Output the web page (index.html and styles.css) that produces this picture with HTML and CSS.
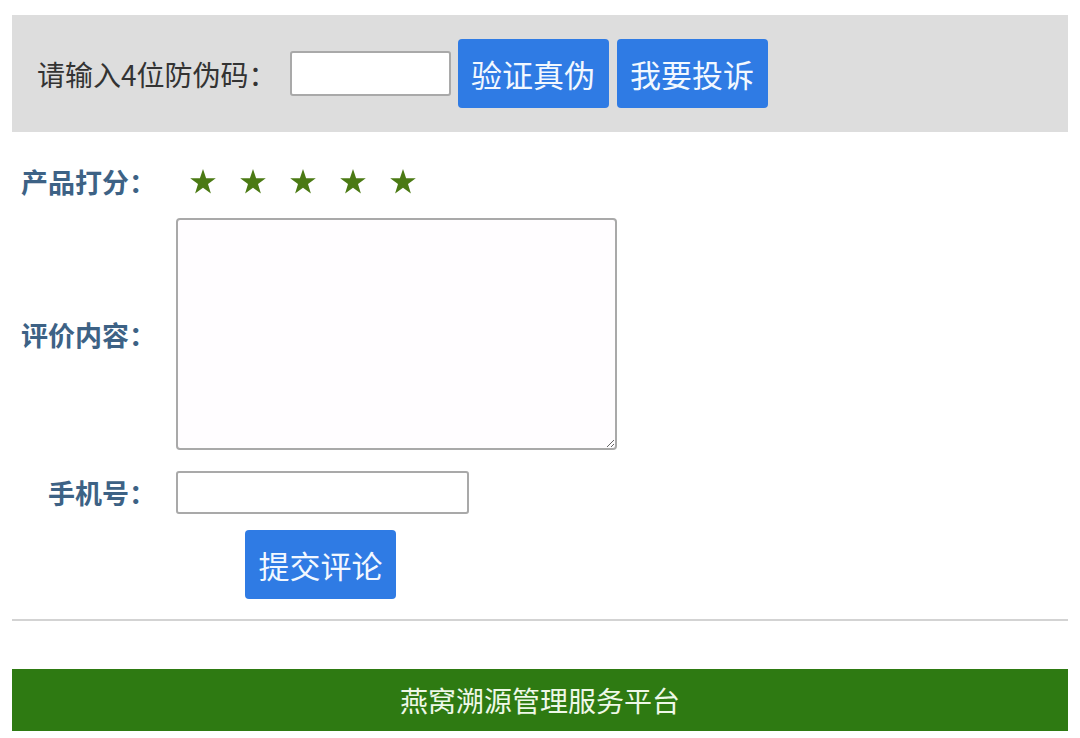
FILE: index.html
```html
<!DOCTYPE html>
<html lang="zh-CN">
<head>
<meta charset="utf-8">
<title>燕窝溯源管理服务平台</title>
<link rel="stylesheet" href="styles.css">
</head>
<body>
<div class="page">
  <div class="verify">
    <span class="verify-label">请输入4位防伪码：</span>
    <input class="code-input" type="text">
    <button class="btn btn-check">验证真伪</button>
    <button class="btn btn-complain">我要投诉</button>
  </div>

  <div class="form">
    <div class="row row-rating">
      <label class="label">产品打分：</label>
      <div class="stars">
        <svg class="star" viewBox="0 0 26 25"><polygon points="13,0 16.1,9.2 25.8,9.3 18,15.1 20.9,24.4 13,18.8 5.1,24.4 8,15.1 0.2,9.3 9.9,9.2"/></svg>
        <svg class="star" viewBox="0 0 26 25"><polygon points="13,0 16.1,9.2 25.8,9.3 18,15.1 20.9,24.4 13,18.8 5.1,24.4 8,15.1 0.2,9.3 9.9,9.2"/></svg>
        <svg class="star" viewBox="0 0 26 25"><polygon points="13,0 16.1,9.2 25.8,9.3 18,15.1 20.9,24.4 13,18.8 5.1,24.4 8,15.1 0.2,9.3 9.9,9.2"/></svg>
        <svg class="star" viewBox="0 0 26 25"><polygon points="13,0 16.1,9.2 25.8,9.3 18,15.1 20.9,24.4 13,18.8 5.1,24.4 8,15.1 0.2,9.3 9.9,9.2"/></svg>
        <svg class="star" viewBox="0 0 26 25"><polygon points="13,0 16.1,9.2 25.8,9.3 18,15.1 20.9,24.4 13,18.8 5.1,24.4 8,15.1 0.2,9.3 9.9,9.2"/></svg>
      </div>
    </div>
    <div class="row row-content">
      <label class="label">评价内容：</label>
      <textarea class="content-input"></textarea>
    </div>
    <div class="row row-phone">
      <label class="label">手机号：</label>
      <input class="phone-input" type="text">
    </div>
    <div class="row row-submit">
      <span></span>
      <button class="btn btn-submit">提交评论</button>
    </div>
  </div>

  <div class="divider"></div>

  <div class="footer">燕窝溯源管理服务平台</div>
</div>
</body>
</html>
```

FILE: styles.css
```css
* {
  box-sizing: border-box;
}

html, body {
  margin: 0;
  padding: 0;
  background: #ffffff;
}

body {
  font-family: "Noto Sans CJK SC", "Noto Sans", sans-serif;
  color: #333333;
}

.page {
  padding: 15px 12px 0 12px;
}

.verify {
  height: 117px;
  background: #dddddd;
  display: flex;
  align-items: center;
  padding-left: 25px;
}

.verify-label {
  font-size: 28px;
  line-height: 1;
  color: #333333;
  margin-right: 13px;
}

.code-input {
  width: 161px;
  height: 45px;
  border: 2px solid #a9a9a9;
  border-radius: 3px;
  background: #ffffff;
  margin: 0 7px 0 0;
  padding: 0;
}

.btn {
  width: 151px;
  height: 69px;
  border: none;
  border-radius: 4px;
  background: #2f7be4;
  color: #f2f8ff;
  font-family: "Noto Sans CJK SC", "Noto Sans", sans-serif;
  font-size: 31px;
  line-height: 1;
  padding: 0;
  margin: 0;
}

.btn-complain {
  margin-left: 8px;
}

.form {
  margin-top: 35px;
  display: flex;
  flex-direction: column;
}

.row {
  display: grid;
  grid-template-columns: 144px auto;
  column-gap: 20px;
  align-items: center;
  justify-items: start;
}

.label {
  justify-self: end;
  font-size: 27px;
  line-height: 1;
  font-weight: bold;
  color: #3d6285;
}

.row-rating {
  height: 28px;
}

.stars {
  display: flex;
  gap: 24px;
  margin-left: 14px;
}

.star {
  width: 26px;
  height: 25px;
  fill: #4b7a14;
  display: block;
}

.row-content {
  margin-top: 23px;
}

.content-input {
  width: 441px;
  height: 232px;
  border: 2px solid #a9a9a9;
  border-radius: 4px;
  background: #fffdff;
  margin: 0;
  padding: 0;
  display: block;
}

.row-phone {
  margin-top: 21px;
}

.phone-input {
  width: 293px;
  height: 43px;
  border: 2px solid #a9a9a9;
  border-radius: 3px;
  background: #ffffff;
  margin: 0;
  padding: 0;
}

.row-submit {
  margin-top: 16px;
}

.btn-submit {
  margin-left: 69px;
}

.divider {
  margin-top: 20px;
  height: 2px;
  background: #d3d3d3;
}

.footer {
  margin-top: 48px;
  height: 62px;
  background: #2e7a12;
  color: #eef8e8;
  font-size: 28px;
  display: flex;
  align-items: center;
  justify-content: center;
}
```
